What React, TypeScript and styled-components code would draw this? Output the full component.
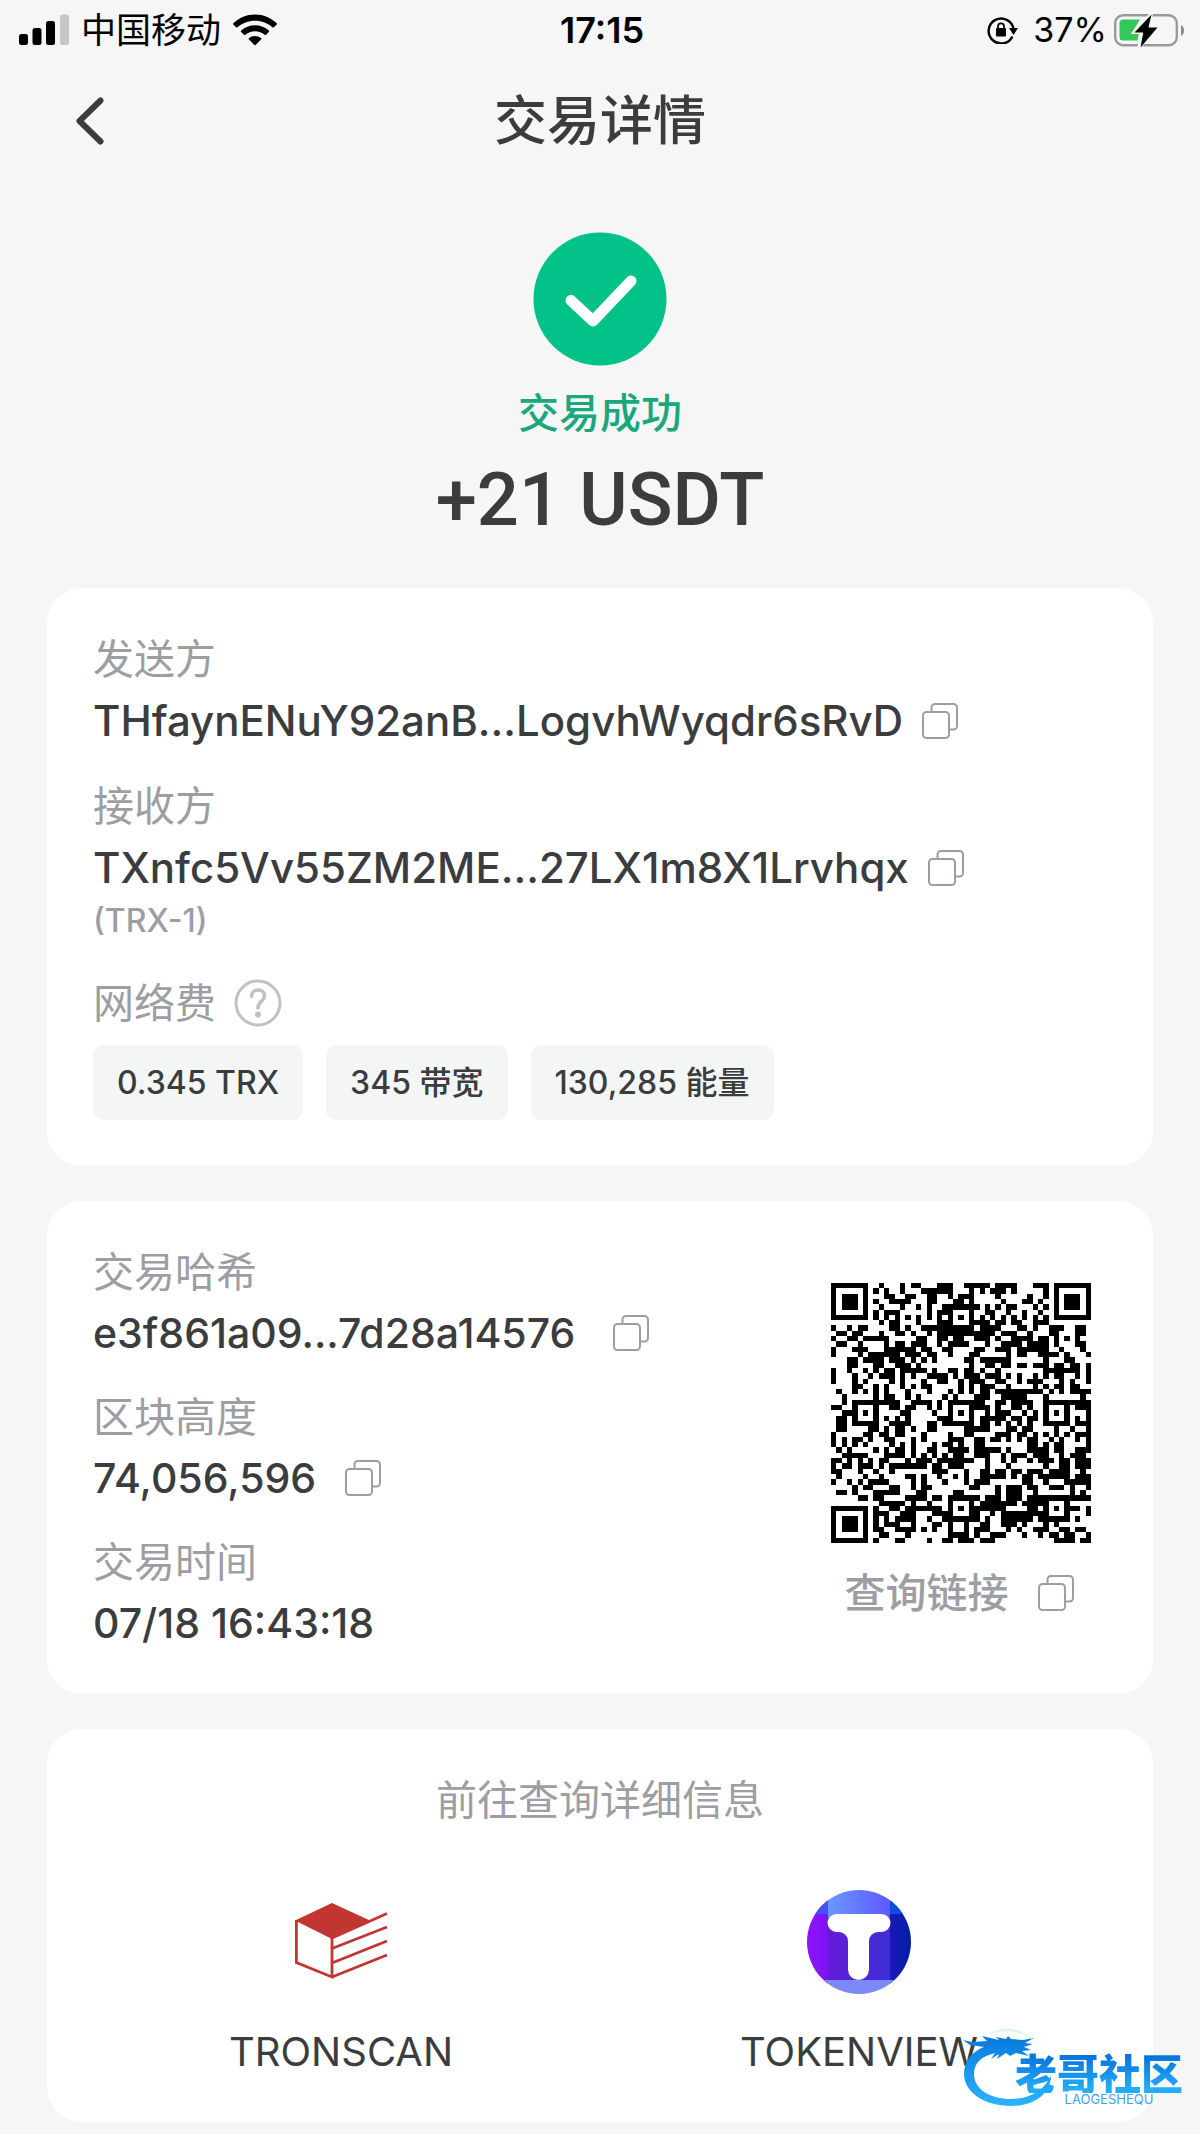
import React from 'react';
import styled, { createGlobalStyle } from 'styled-components';

const ink = '#3b3c3e';
const muted = '#9c9ea3';

const GlobalStyle = createGlobalStyle`
  * { box-sizing: border-box; }
  body {
    margin: 0;
    background: #f6f6f6;
    color: ${ink};
    font-family: Inter, "Noto Sans CJK SC", sans-serif;
  }
  h1, h2, p, dl, dt, dd { margin: 0; font-weight: inherit; }
  svg { display: block; flex: none; }
`;

const Page = styled.div`
  position: relative;
  padding-bottom: 11px;
`;

const StatusBar = styled.div`
  display: grid;
  grid-template-columns: 1fr auto 1fr;
  align-items: center;
  height: 60px;
  padding: 0 15px 0 19px;
  color: #000;
  font-size: 35px;
  line-height: 48px;
`;

const StatusGroup = styled.div<{ $end?: boolean }>`
  display: flex;
  align-items: center;
  justify-content: ${(p) => (p.$end ? 'flex-end' : 'flex-start')};
  gap: ${(p) => (p.$end ? '7px' : '12px')};
`;

const Clock = styled.time`
  font-size: 36px;
  font-weight: 600;
`;

const Battery = styled.span`
  padding-left: 8px;
  font-size: 34px;
`;

const TitleBar = styled.header`
  display: grid;
  grid-template-columns: 1fr auto 1fr;
  align-items: center;
  height: 122px;
  padding: 0 64px;
`;

const IconButton = styled.button`
  display: inline-flex;
  align-items: center;
  padding: 0;
  border: 0;
  background: none;
  color: ${muted};
  cursor: pointer;
`;

const BackButton = styled(IconButton)`
  justify-self: start;
  padding: 8px;
  color: ${ink};
`;

const Title = styled.h1`
  font-size: 53px;
  line-height: 72px;
  font-weight: 500;
`;

const Result = styled.section`
  display: flex;
  flex-direction: column;
  align-items: center;
  padding: 50px 0 43px;
`;

const ResultText = styled.p`
  margin-top: 19px;
  color: #1aa77c;
  font-size: 41px;
  line-height: 56px;
  font-weight: 500;
`;

const Amount = styled.p`
  margin-top: 14px;
  font-family: Roboto, Inter, sans-serif;
  font-size: 74px;
  line-height: 90px;
  font-weight: 500;
`;

const Cards = styled.main`
  display: flex;
  flex-direction: column;
  gap: 35px;
  padding: 0 47px;
`;

const Card = styled.section`
  border-radius: 35px;
  background: #fff;
  padding: 43px 46px 46px;
`;

const SplitCard = styled(Card)`
  display: flex;
  justify-content: space-between;
  padding-bottom: 44px;
`;

const Fields = styled.dl`
  display: flex;
  flex-direction: column;
  gap: 29px;
`;

const Label = styled.dt`
  display: flex;
  align-items: center;
  gap: 18px;
  color: ${muted};
  font-size: 41px;
  line-height: 56px;
`;

const Value = styled.dd<{ $gap?: number; $small?: boolean }>`
  display: flex;
  align-items: center;
  gap: ${(p) => p.$gap ?? 19}px;
  margin-top: 6px;
  font-size: ${(p) => (p.$small ? 41 : 42)}px;
  line-height: ${(p) => (p.$small ? 54 : 56)}px;
  font-weight: 500;
`;

const Note = styled.dd`
  color: ${muted};
  font-size: 32px;
  line-height: 50px;
  font-weight: 500;
`;

const Chips = styled.dd`
  display: flex;
  flex-wrap: wrap;
  gap: 23px;
  margin-top: 14px;
`;

const Chip = styled.span`
  padding: 0 24px;
  border-radius: 10px;
  background: #f4f6f6;
  font-size: 32px;
  line-height: 75px;
  font-weight: 500;
`;

const QrColumn = styled.div`
  display: flex;
  flex-direction: column;
  align-items: center;
  padding: 39px 16px 0 0;
`;

const QrLink = styled.div`
  display: flex;
  align-items: center;
  gap: 29px;
  margin-top: 22px;
  padding-right: 4px;
  color: ${muted};
  font-size: 41px;
  line-height: 56px;
  font-weight: 500;
`;

const ExplorerCard = styled(Card)`
  padding: 43px 35px 46px;
`;

const ExplorerTitle = styled.h2`
  color: ${muted};
  font-size: 41px;
  line-height: 56px;
  text-align: center;
`;

const Explorers = styled.nav`
  display: grid;
  grid-template-columns: 1fr 1fr;
  margin-top: 62px;
`;

const Explorer = styled.a`
  display: flex;
  flex-direction: column;
  align-items: center;
  gap: 34px;
  color: ${ink};
  font-size: 40px;
  line-height: 48px;
  text-decoration: none;
`;

const Watermark = styled.div`
  position: absolute;
  right: 14px;
  bottom: 20px;
  display: flex;
  justify-content: flex-end;
  width: 224px;
  height: 86px;
  padding-right: 3px;
`;

const WatermarkArt = styled.svg`
  position: absolute;
  left: 0;
  top: 0;
`;

const WatermarkText = styled.div`
  position: relative;
  display: flex;
  flex-direction: column;
  align-items: center;
  padding-top: 24px;
`;

const WatermarkName = styled.span`
  font-family: "Noto Sans CJK SC", sans-serif;
  font-size: 42px;
  line-height: 42px;
  font-weight: 900;
  color: transparent;
  background: linear-gradient(#0a76dc 15%, #24acfa 90%);
  background-clip: text;
`;

const WatermarkLatin = styled.span`
  padding-left: 20px;
  color: #3da5f0;
  font-size: 13px;
  line-height: 12px;
`;

const SignalIcon = () => (
  <svg width="50" height="32" viewBox="0 0 50 32" aria-hidden="true">
    <rect x="0" y="20" width="9" height="11" rx="2.5" />
    <rect x="13.5" y="14" width="9" height="17" rx="2.5" />
    <rect x="27" y="7" width="9" height="24" rx="2.5" />
    <rect x="41" y="0.5" width="9" height="30.5" rx="2.5" fill="#c6c6c6" />
  </svg>
);

const WifiIcon = () => (
  <svg width="44" height="32" viewBox="0 0 44 32" aria-hidden="true">
    <path d="M22 .5C13.7.5 6.2 3.7.5 9.1c-.5.5-.5 1.1 0 1.6l2.6 2.6c.4.4 1.1.4 1.5 0C9.2 9.1 15.2 6.700 22 6.700s12.800 2.400 17.400 6.600c.4.400 1.100.4 1.500 0l2.600-2.600c.5-.5.5-1.100 0-1.600C37.800 3.700 30.300.5 22 .5Z" />
    <path d="M22 11.300c-5.300 0-10.100 2-13.800 5.200-.5.500-.5 1.100 0 1.600l2.700 2.700c.4.400 1 .4 1.500 0 2.600-2.200 5.900-3.500 9.600-3.500s7 1.300 9.600 3.500c.5.400 1.100.4 1.500 0l2.700-2.700c.5-.5.5-1.100 0-1.600-3.700-3.200-8.500-5.200-13.800-5.200Z" />
    <path d="M22 22c-2.300 0-4.400.8-6 2.100-.5.400-.5 1.100 0 1.500l5.200 5.200c.5.500 1.100.5 1.600 0l5.200-5.200c.5-.4.5-1.100 0-1.500-1.600-1.300-3.700-2.100-6-2.100Z" />
  </svg>
);

const RotationLockIcon = () => (
  <svg width="31" height="28" viewBox="0 0 31 28" aria-hidden="true">
    <path d="M25.400 20.500A12.500 12.500 0 1 1 26.500 13" fill="none" stroke="#000" strokeWidth="2.4" />
    <path d="M22 12h9l-4.500 7Z" />
    <rect x="9" y="12" width="10" height="8.5" rx="1" />
    <path d="M11 12.500v-2.200a3 3 0 0 1 6 0v2.200" fill="none" stroke="#000" strokeWidth="1.7" />
  </svg>
);

const BatteryIcon = () => (
  <svg width="71" height="36" viewBox="0 0 71 36" aria-hidden="true">
    <rect x="1.2" y="3.2" width="61.6" height="30" rx="8" fill="none" stroke="#9a9a9a" strokeWidth="2.4" />
    <path d="M67 13c4 2 4 9 0 11Z" fill="#8b8b8b" />
    <path d="M9 7.500h17L18 20.500h7l-1.500 8H9A3.500 3.500 0 0 1 5.500 25V11A3.500 3.500 0 0 1 9 7.500Z" fill="#34c759" />
    <path d="M37.500 1.500 20 20.500h8L25 35.500 44 15.500h-9Z" stroke="#f6f6f6" strokeWidth="3" />
    <path d="M37.500 2.500 20.500 20.500h9L26.500 35.500 43.500 15.500h-9Z" />
  </svg>
);

const BackIcon = () => (
  <svg width="36" height="48" viewBox="0 0 36 48" fill="none" aria-hidden="true">
    <path d="M28.500 3.500 7.500 24l21 20.500" stroke="currentColor" strokeWidth="6" strokeLinecap="round" strokeLinejoin="round" />
  </svg>
);

const SuccessIcon = () => (
  <svg width="134" height="134" viewBox="0 0 134 134" role="img" aria-label="成功">
    <circle cx="67" cy="67" r="66.5" fill="#02c28a" />
    <path d="M38 68.500 60 89l38-40" fill="none" stroke="#fff" strokeWidth="11" strokeLinecap="round" strokeLinejoin="round" />
  </svg>
);

const CopyButton = ({ label }: { label: string }) => (
  <IconButton type="button" aria-label={label}>
    <svg width="36" height="36" viewBox="0 0 36 36" fill="none" stroke="currentColor" strokeWidth="2" aria-hidden="true">
      <rect x="1" y="9" width="26" height="26" rx="3.5" />
      <path d="M9.500 9V4.500A3.500 3.500 0 0 1 13 1h18.500A3.500 3.500 0 0 1 35 4.500V23a3.500 3.500 0 0 1-3.500 3.500H27" />
    </svg>
  </IconButton>
);

const HelpIcon = () => (
  <svg width="48" height="48" viewBox="0 0 48 48" fill="none" stroke="#bfc1c5" strokeWidth="3" strokeLinecap="round" aria-hidden="true">
    <circle cx="24" cy="24" r="22" />
    <path d="M17.500 17.500c0-4 2.800-6.500 6.500-6.500s6.500 2.500 6.500 6c0 5-6.500 5.500-6.500 12" strokeWidth="3.6" />
    <circle cx="24" cy="35.5" r="3" fill="#bfc1c5" stroke="none" />
  </svg>
);

const QR_SIZE = 49;

function buildQrPath(): string {
  let seed = 74056596;
  const next = () => {
    seed = (Math.imul(seed, 1664525) + 1013904223) >>> 0;
    return seed / 4294967296;
  };
  const grid = Array.from({ length: QR_SIZE }, () =>
    Array.from({ length: QR_SIZE }, () => next() < 0.5),
  );
  const ring = (cx: number, cy: number, reach: number, dark: (d: number) => boolean) => {
    for (let y = cy - reach; y <= cy + reach; y++) {
      for (let x = cx - reach; x <= cx + reach; x++) {
        if (grid[y] && x >= 0 && x < QR_SIZE) {
          grid[y][x] = dark(Math.max(Math.abs(x - cx), Math.abs(y - cy)));
        }
      }
    }
  };
  for (let i = 8; i < QR_SIZE - 8; i++) {
    grid[6][i] = i % 2 === 0;
    grid[i][6] = i % 2 === 0;
  }
  [[24, 6], [6, 24], [24, 24], [42, 24], [24, 42], [42, 42]].forEach(([x, y]) =>
    ring(x, y, 2, (d) => d !== 1),
  );
  [[3, 3], [45, 3], [3, 45]].forEach(([x, y]) => ring(x, y, 4, (d) => d !== 2 && d !== 4));
  return grid
    .map((row, y) => row.map((on, x) => (on ? `M${x} ${y}h1v1h-1z` : '')).join(''))
    .join('');
}

const qrPath = buildQrPath();

const QrCode = () => (
  <svg width="260" height="260" viewBox="0 0 49 49" shapeRendering="crispEdges" role="img" aria-label="二维码">
    <path d={qrPath} fill="#000" />
  </svg>
);

const TronscanLogo = () => (
  <svg width="104" height="104" viewBox="0 0 104 104" fill="none" stroke="#c23631" strokeWidth="2.8" aria-hidden="true">
    <path d="M6 30.500 43 13l38 17.500L43 49Z" fill="#c23631" stroke="none" />
    <path d="M7.400 30v42.500L43 87V46M43 48l55-24.500M43 58.500l55-21.500M43 73l55-22M43 87l55-22" />
  </svg>
);

const TokenviewLogo = () => (
  <svg width="104" height="104" viewBox="0 0 104 104" aria-hidden="true">
    <defs>
      <clipPath id="tvClip"><circle cx="52" cy="52" r="52" /></clipPath>
      <linearGradient id="tvMid"><stop stopColor="#641bd8" /><stop offset="1" stopColor="#3b2fd6" /></linearGradient>
      <linearGradient id="tvTop"><stop stopColor="#6a97ff" /><stop offset="1" stopColor="#5e58ff" /></linearGradient>
      <linearGradient id="tvLeft"><stop stopColor="#9013ff" /><stop offset="1" stopColor="#7c12f2" /></linearGradient>
      <linearGradient id="tvRight"><stop stopColor="#1b17ba" /><stop offset="1" stopColor="#0320a4" /></linearGradient>
    </defs>
    <g clipPath="url(#tvClip)">
      <rect width="21" height="104" fill="url(#tvLeft)" />
      <rect x="83" width="21" height="104" fill="url(#tvRight)" />
      <rect x="21" y="24" width="62" height="66" fill="url(#tvMid)" />
      <rect width="21" height="24" fill="#4650fb" />
      <rect x="83" width="21" height="24" fill="#0b50dc" />
      <rect x="21" width="62" height="28" fill="url(#tvTop)" />
      <rect y="90" width="104" height="14" fill="#7d88f7" />
    </g>
    <path d="M29.500 24h45a9 9 0 0 1 0 18H71a9 9 0 0 0-9 9v28.500a10.500 10.500 0 0 1-21 0V51a9 9 0 0 0-9-9h-2.500a9 9 0 0 1 0-18Z" fill="#fff" />
  </svg>
);

const DragonMark = () => (
  <WatermarkArt width="96" height="86" viewBox="0 0 96 86" aria-hidden="true">
    <defs>
      <linearGradient id="dragon" x1="0" y1="0" x2="0" y2="1">
        <stop stopColor="#0a78dc" />
        <stop offset="1" stopColor="#2bb4ff" />
      </linearGradient>
    </defs>
    <path
      fill="url(#dragon)"
      d="M22 20C9 25 2 35 2 47c0 18 20 32 47 32 22 0 39-11 40-30-7 14-21 23-40 23-21 0-37-10-37-25 0-10 6-16 15-19l6-2-4 6 8-5-2 5 9-6 4 3 6-3 13 3-7-5 9-1-7-3 9-3-8-1 9-5-11 2-12-1-3-3-2 3-10-2 3 3-17-4 5 5-15 1-9-2 7 5Z"
    />
    <path d="M28 6c14-4 34-3 43 7M36 3c12-2 20 0 26 4" fill="none" stroke="#d8ebfa" strokeWidth="1" />
  </WatermarkArt>
);

export default function App() {
  return (
    <>
      <GlobalStyle />
      <Page>
        <StatusBar>
          <StatusGroup>
            <SignalIcon />
            <span>中国移动</span>
            <WifiIcon />
          </StatusGroup>
          <Clock>17:15</Clock>
          <StatusGroup $end>
            <RotationLockIcon />
            <Battery>37%</Battery>
            <BatteryIcon />
          </StatusGroup>
        </StatusBar>

        <TitleBar>
          <BackButton type="button" aria-label="返回">
            <BackIcon />
          </BackButton>
          <Title>交易详情</Title>
        </TitleBar>

        <Result>
          <SuccessIcon />
          <ResultText>交易成功</ResultText>
          <Amount>+21 USDT</Amount>
        </Result>

        <Cards>
          <Card>
            <Fields>
              <div>
                <Label>发送方</Label>
                <Value>
                  THfaynENuY92anB...LogvhWyqdr6sRvD
                  <CopyButton label="复制发送方" />
                </Value>
              </div>
              <div>
                <Label>接收方</Label>
                <Value>
                  TXnfc5Vv55ZM2ME...27LX1m8X1Lrvhqx
                  <CopyButton label="复制接收方" />
                </Value>
                <Note>(TRX-1)</Note>
              </div>
              <div>
                <Label>
                  网络费
                  <IconButton type="button" aria-label="网络费说明">
                    <HelpIcon />
                  </IconButton>
                </Label>
                <Chips>
                  <Chip>0.345 TRX</Chip>
                  <Chip>345 带宽</Chip>
                  <Chip>130,285 能量</Chip>
                </Chips>
              </div>
            </Fields>
          </Card>

          <SplitCard>
            <Fields>
              <div>
                <Label>交易哈希</Label>
                <Value $small $gap={38}>
                  e3f861a09...7d28a14576
                  <CopyButton label="复制交易哈希" />
                </Value>
              </div>
              <div>
                <Label>区块高度</Label>
                <Value $small $gap={29}>
                  74,056,596
                  <CopyButton label="复制区块高度" />
                </Value>
              </div>
              <div>
                <Label>交易时间</Label>
                <Value $small>07/18 16:43:18</Value>
              </div>
            </Fields>
            <QrColumn>
              <QrCode />
              <QrLink>
                查询链接
                <CopyButton label="复制查询链接" />
              </QrLink>
            </QrColumn>
          </SplitCard>

          <ExplorerCard>
            <ExplorerTitle>前往查询详细信息</ExplorerTitle>
            <Explorers>
              <Explorer href="#tronscan">
                <TronscanLogo />
                TRONSCAN
              </Explorer>
              <Explorer href="#tokenview">
                <TokenviewLogo />
                TOKENVIEW
              </Explorer>
            </Explorers>
          </ExplorerCard>
        </Cards>

        <Watermark>
          <DragonMark />
          <WatermarkText>
            <WatermarkName>老哥社区</WatermarkName>
            <WatermarkLatin>LAOGESHEQU</WatermarkLatin>
          </WatermarkText>
        </Watermark>
      </Page>
    </>
  );
}
